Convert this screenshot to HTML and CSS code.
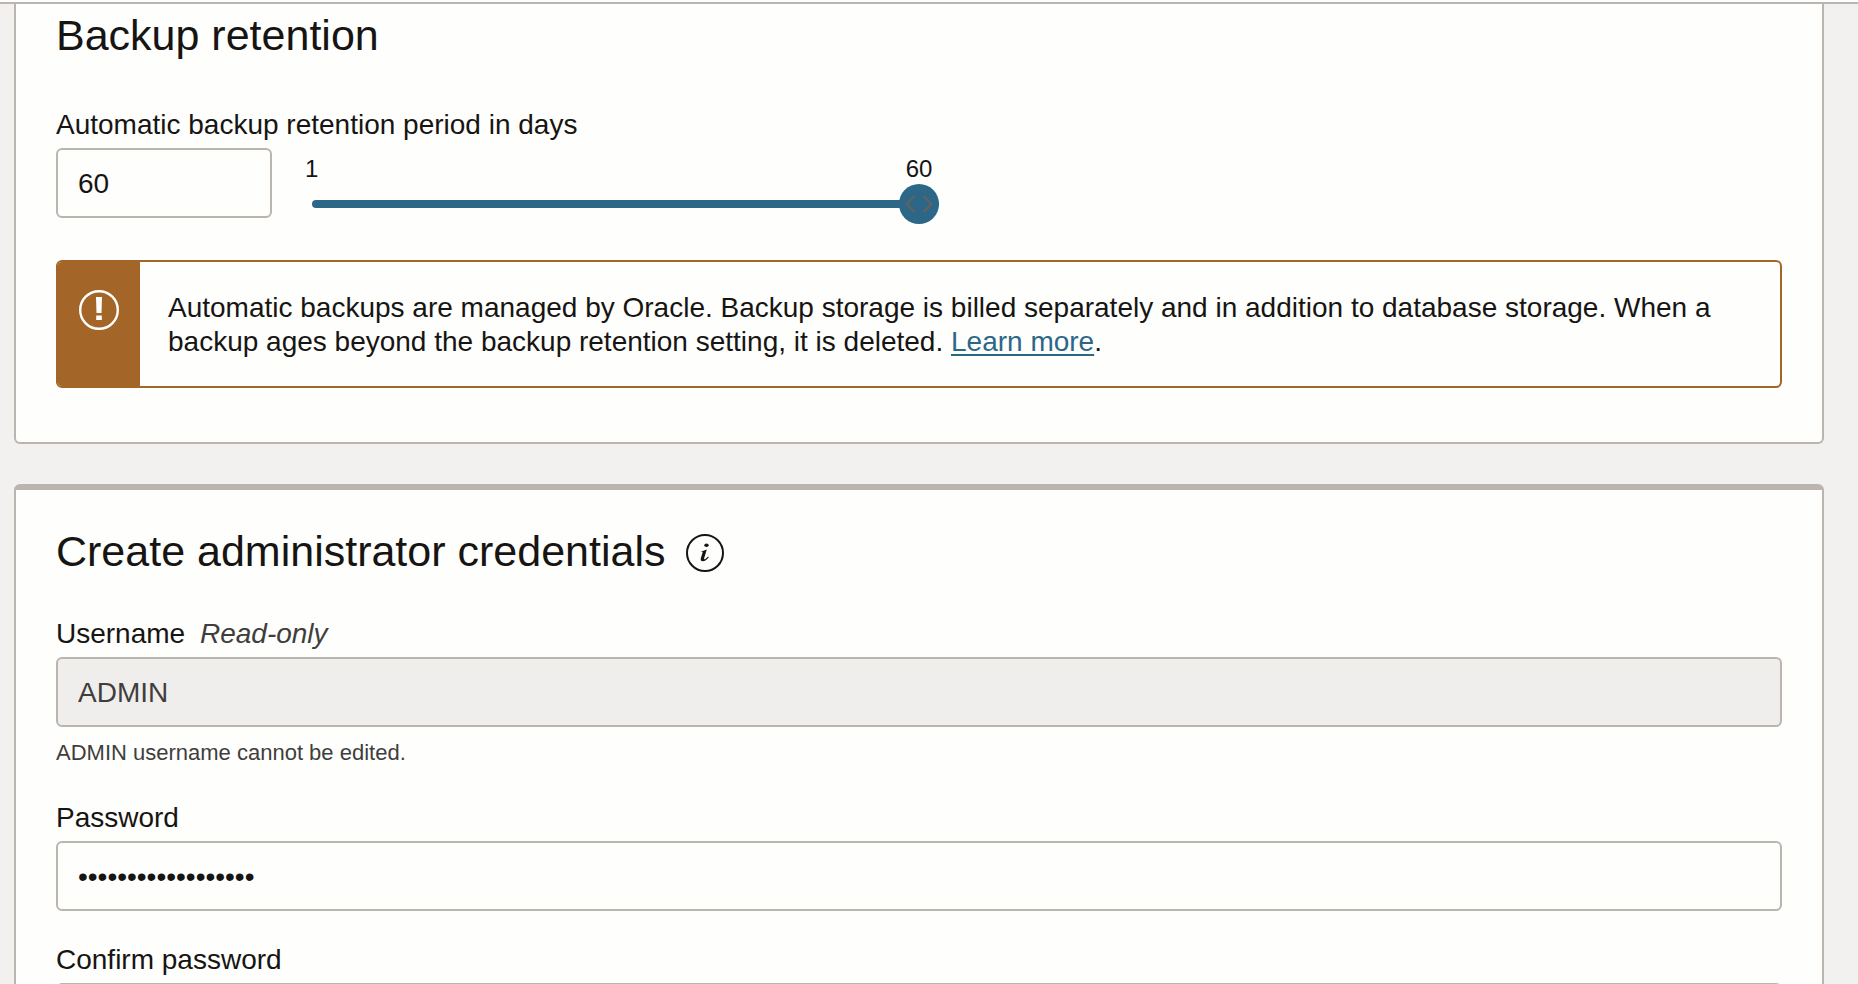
FILE: index.html
```html
<!DOCTYPE html>
<html lang="en">
<head>
<meta charset="utf-8">
<meta name="viewport" content="width=device-width, initial-scale=1">
<title>Create database</title>
<link rel="stylesheet" href="styles.css">
</head>
<body>
<main class="page">
  <section class="card card-continued">
    <h2 class="card-title">Backup retention</h2>
    <label class="label" for="retention">Automatic backup retention period in days</label>
    <div class="retention-row">
      <input class="field field-short" id="retention" type="text" inputmode="numeric" value="60">
      <div class="slider">
        <div class="slider-scale"><span class="scale-min">1</span><span class="scale-max">60</span></div>
        <div class="slider-control">
          <input class="range" type="range" min="1" max="60" value="60" aria-label="Retention period in days">
          <svg class="thumb-arrows" viewBox="0 0 40 40" aria-hidden="true"><path d="M15.500 12 7.500 20 15.500 28M24.500 12 32.500 20 24.500 28"/></svg>
        </div>
      </div>
    </div>
    <div class="notice" role="note">
      <div class="notice-side">
        <svg class="notice-icon" viewBox="0 0 40 40" aria-hidden="true"><circle cx="20" cy="20" r="18.800"/><path d="M17 7h6l-.5 16h-5zM17.200 25.500h5.600V30h-5.600z"/></svg>
      </div>
      <p class="notice-text">Automatic backups are managed by Oracle. Backup storage is billed separately and in addition to database storage. When a backup ages beyond the backup retention setting, it is deleted. <a class="link" href="#">Learn more</a>.</p>
    </div>
  </section>

  <section class="card card-accent">
    <div class="title-row">
      <h2 class="card-title">Create administrator credentials</h2>
      <button class="info" type="button" aria-label="More information">
        <svg class="info-icon" viewBox="0 0 38 38" aria-hidden="true"><circle cx="19" cy="19" r="18"/><path class="info-stem" d="M15.500 17.200c2.200-.3 3.400-1.200 5.300-1.700l-2.600 8.500c-.4 1.600.4 1.600 1.500.8l2.400-2.300.7.700c-2.200 2.800-3.900 4.100-5.900 4.100-1.900 0-2.600-1.200-2-3.300l1.700-5.600c.2-.7-.2-.8-1.300-.6z"/><ellipse class="info-dot" cx="20.500" cy="11.200" rx="2.200" ry="1.700"/></svg>
      </button>
    </div>
    <form class="form">
      <div class="form-item">
        <label class="label" for="username">Username <em class="hint">Read-only</em></label>
        <input class="field field-readonly" id="username" type="text" value="ADMIN" readonly aria-describedby="username-help">
        <p class="help" id="username-help">ADMIN username cannot be edited.</p>
      </div>
      <div class="form-item">
        <label class="label" for="password">Password</label>
        <input class="field" id="password" type="password" value="abcdefghijklmnopqr" autocomplete="new-password">
      </div>
      <div class="form-item">
        <label class="label" for="confirm">Confirm password</label>
        <input class="field" id="confirm" type="password" value="abcdefghijklmnopqr" autocomplete="new-password">
      </div>
    </form>
  </section>
</main>
</body>
</html>
```
FILE: styles.css
```css
* { box-sizing: border-box; }

body {
  margin: 0;
  height: 100vh;
  overflow: hidden;
  border-top: 2px solid #fff;
  background: #f3f1f0;
  color: #161513;
  font: 28px/34px "Liberation Sans", Arial, sans-serif;
}

.page {
  display: flex;
  flex-direction: column;
  gap: 40px;
  padding: 0 34px 40px 14px;
  border-top: 2px solid #bbb5b0;
}

.card {
  padding: 36px 40px 54px;
  border: 2px solid #bbb5b0;
  border-radius: 6px;
  background: #fefefc;
}

.card-continued {
  padding-top: 6px;
  border-top: 0;
  border-radius: 0 0 6px 6px;
}

.card-accent { border-top-width: 6px; }

.card-title {
  margin: 0;
  font-size: 43px;
  line-height: 50px;
  font-weight: 400;
}

.card-continued .card-title { margin-bottom: 47px; }

.title-row {
  display: flex;
  align-items: center;
  gap: 21px;
  margin-bottom: 40px;
}

.info {
  display: flex;
  padding: 4px 0 0;
  border: 0;
  background: none;
  cursor: pointer;
}

.info-icon {
  width: 38px;
  height: 38px;
  fill: none;
  stroke: #161513;
  stroke-width: 2;
}

.info-stem,
.info-dot {
  fill: #161513;
  stroke: none;
}

.label { display: block; padding-top: 1px; margin-bottom: 6px; }

.hint { margin-left: 7px; color: #403e3c; }

.field {
  display: block;
  width: 100%;
  height: 70px;
  padding: 2px 20px 0;
  border: 2px solid #bbb5b0;
  border-radius: 6px;
  background: #fefefc;
  color: #161513;
  font: inherit;
}

.field-short { width: 216px; }

.field-readonly { background: #f0eeed; color: #403e3c; }

.retention-row {
  display: flex;
  gap: 40px;
  margin-bottom: 36px;
}

.slider { flex: 0 1 627px; padding-top: 6px; }

.slider-scale {
  display: flex;
  justify-content: space-between;
  font-size: 24px;
  line-height: 30px;
}

.scale-min { margin-left: -7px; }

.scale-max { width: 40px; text-align: center; }

.slider-control { position: relative; height: 40px; }

.range {
  display: block;
  width: 100%;
  height: 40px;
  margin: 0;
  appearance: none;
  background: none;
}

.range::-webkit-slider-runnable-track {
  height: 8px;
  border-radius: 4px;
  background: #2c6788;
}

.range::-webkit-slider-thumb {
  width: 40px;
  height: 40px;
  margin-top: -16px;
  appearance: none;
  border-radius: 50%;
  background: #2c6788;
}

.thumb-arrows {
  position: absolute;
  top: 0;
  right: 0;
  width: 40px;
  height: 40px;
  fill: none;
  stroke: #67605c;
  stroke-width: 2;
  pointer-events: none;
}

.notice {
  display: flex;
  overflow: hidden;
  border: 2px solid #a36628;
  border-radius: 6px;
}

.notice-side {
  flex: none;
  width: 82px;
  padding: 28px 0 0 21px;
  background: #a36628;
}

.notice-icon {
  display: block;
  width: 40px;
  height: 40px;
  fill: none;
  stroke: #fff;
  stroke-width: 2.400;
}

.notice-icon path { fill: #fff; stroke: none; }

.notice-text { margin: 0; padding: 29px 28px 27px; }

.link {
  color: #2c6788;
  text-decoration-thickness: 2px;
  text-underline-offset: 3px;
}

.form {
  display: flex;
  flex-direction: column;
  gap: 31px;
}

.help {
  margin: 10px 0 0;
  color: #403e3c;
  font-size: 22px;
  line-height: 32px;
}
```
